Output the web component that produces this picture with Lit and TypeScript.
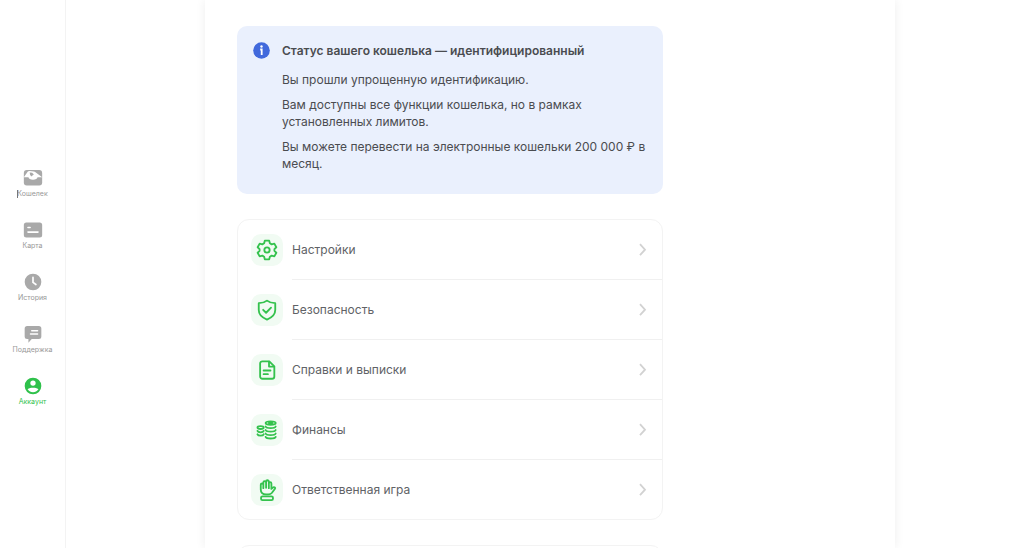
import { LitElement, html, css, svg } from "lit";
import { customElement } from "lit/decorators.js";
import { classMap } from "lit/directives/class-map.js";

const navIcons = {
  wallet: svg`<rect x="1" y="2.500" width="22" height="18.500" rx="3.500"/><path fill="#fff" d="M1 11.200 5.800 4.300q.8-1 2-.8l5.200.6q1 .2 2 .9L23 11.200h-5.500c-.5 2-2.200 2.800-5.500 2.800s-5-.8-5.500-2.800z"/><path d="m8 5.500 3 .3 2 2-3.200 2.400L8.500 8z"/>`,
  card: svg`<rect x="1" y="3" width="22" height="18" rx="3"/><path d="M6 9h2.500M6 14.500h12" stroke="#fff" stroke-width="2" stroke-linecap="round"/>`,
  history: svg`<circle cx="12" cy="12" r="10"/><path d="M12 6.500v6l3.500 2.500" fill="none" stroke="#fff" stroke-width="2" stroke-linecap="round" stroke-linejoin="round"/>`,
  support: svg`<path d="M5 2.500h14a3 3 0 0 1 3 3v9.500a3 3 0 0 1-3 3h-8.500L6.500 22.500V18H5a3 3 0 0 1-3-3V5.500a3 3 0 0 1 3-3z"/><path d="M10.500 8H17.500M9 12h8.500" stroke="#fff" stroke-width="1.800" stroke-linecap="round"/>`,
  account: svg`<circle cx="12" cy="12" r="10"/><circle cx="12" cy="8.500" r="3.200" fill="#fff"/><path fill="#fff" d="M5.500 16c1-2.500 12-2.500 13 0-1.500 2.400-4 3.600-6.500 3.600S7 18.400 5.500 16z"/>`,
};

const menuIcons = {
  settings: svg`<path d="M9.600 1.800h4.800l.7 2.900 2 1.200 2.900-.9 2.200 4-2.100 2v2l2.100 2-2.200 4-2.900-.9-2 1.200-.7 2.900H9.600l-.7-2.900-2-1.200-2.900.9-2.200-4 2.100-2v-2l-2.100-2 2.200-4 2.900.9 2-1.200z"/><circle cx="12" cy="12" r="2.900"/>`,
  security: svg`<path d="M12 1.800c2.500 2 5.500 2.700 9 2.700V12c0 5-3.500 8.200-9 10.400C6.500 20.200 3 17 3 12V4.500c3.500 0 6.500-.7 9-2.700z"/><path d="m7.800 11.800 3.200 3.200 5.400-5.600"/>`,
  documents: svg`<path d="M7 2.500h7.500L20 8v11a2.500 2.500 0 0 1-2.500 2.500H7A2.500 2.500 0 0 1 4.500 19V5A2.500 2.500 0 0 1 7 2.500z"/><path d="M14.200 3v5.300h5.300M8.300 12.500h7.500M8.300 16.500h4.700"/>`,
  finance: svg`<g stroke-width="2"><ellipse cx="16" cy="4.400" rx="5.500" ry="1.900"/><path d="M14 4.400h4"/><path d="M10.500 8.200c1 2.400 10 2.400 11 0M10.500 12c1 2.400 10 2.400 11 0M10.500 15.800c1 2.400 10 2.400 11 0M10.500 19.500c1 2.400 10 2.400 11 0"/><ellipse cx="5" cy="9.300" rx="3.400" ry="1.600"/><path d="M1.600 13c.8 2 6 2 6.800 0M1.600 16.700c.8 2 6 2 6.800 0"/></g>`,
  responsible: svg`<path d="M5.200 11.500V6.300a1.400 1.400 0 0 1 2.800 0V10 3.800a1.500 1.500 0 0 1 3 0V9.500 2.900a1.500 1.500 0 0 1 3 0V10 4.800a1.400 1.400 0 0 1 2.800 0v6l2-1.700c1.300-.8 2.700.5 1.900 1.600l-3.500 4.600c-1 1.200-2.200 1.500-3.700 1.500h-2.500c-3.600 0-5.800-2-5.800-5.300z"/><rect x="5.500" y="19" width="13" height="4" rx="1.500"/>`,
};

type Item<T> = { label: string; icon: T; active?: boolean };

const navigation: Item<keyof typeof navIcons>[] = [
  { label: "Кошелек", icon: "wallet" },
  { label: "Карта", icon: "card" },
  { label: "История", icon: "history" },
  { label: "Поддержка", icon: "support" },
  { label: "Аккаунт", icon: "account", active: true },
];

const menu: Item<keyof typeof menuIcons>[] = [
  { label: "Настройки", icon: "settings" },
  { label: "Безопасность", icon: "security" },
  { label: "Справки и выписки", icon: "documents" },
  { label: "Финансы", icon: "finance" },
  { label: "Ответственная игра", icon: "responsible" },
];

@customElement("app-sidebar")
class AppSidebar extends LitElement {
  static styles = css`
    :host {
      display: flex;
      flex-direction: column;
      justify-content: center;
      box-sizing: border-box;
      width: 66px;
      padding-top: 28px;
      flex: none;
      border-right: 1px solid #f3f3f3;
      background: #fff;
    }
    .nav {
      display: flex;
      flex-direction: column;
      gap: 20px;
    }
    .link {
      display: flex;
      flex-direction: column;
      align-items: center;
      gap: 2px;
      height: 32px;
      font-size: 7px;
      line-height: 8px;
      color: #989898;
      text-decoration: none;
    }
    .icon {
      width: 20px;
      height: 20px;
      fill: currentColor;
      color: #a9a9a9;
    }
    .caret {
      position: relative;
    }
    .caret::before {
      content: "";
      position: absolute;
      left: 0;
      top: 0;
      width: 1px;
      height: 8px;
      background: #777;
    }
    .active,
    .active .icon {
      color: #2fc14b;
    }
  `;

  render() {
    return html`<nav class="nav">
      ${navigation.map(
        (item, index) => html`<a class=${classMap({ link: true, active: !!item.active })} href="#${item.icon}">
          <svg class="icon" viewBox="0 0 24 24" aria-hidden="true">${navIcons[item.icon]}</svg>
          <span class=${classMap({ caret: index === 0 })}>${item.label}</span>
        </a>`
      )}
    </nav>`;
  }
}

@customElement("status-banner")
class StatusBanner extends LitElement {
  static styles = css`
    :host {
      display: flex;
      gap: 12px;
      padding: 16px 16px 22px;
      border-radius: 10px;
      background: #eaf0fd;
      color: #4a4c50;
      font-size: 12px;
      line-height: 17px;
    }
    .info {
      width: 17px;
      height: 17px;
      flex: none;
    }
    .title {
      margin: 0 0 12px;
      font-size: 12px;
      font-weight: 600;
    }
    .text {
      margin: 8px 0 0;
    }
  `;

  render() {
    return html`
      <svg class="info" viewBox="0 0 17 17" aria-hidden="true">
        <circle cx="8.500" cy="8.500" r="8.300" fill="#4169dc" />
        <path d="M7.200 7.500h1.500V13" fill="none" stroke="#fff" stroke-width="1.800" />
        <circle cx="8.500" cy="4.500" r="1.200" fill="#fff" />
      </svg>
      <div>
        <h2 class="title">Статус вашего кошелька — идентифицированный</h2>
        <p class="text">Вы прошли упрощенную идентификацию.</p>
        <p class="text">Вам доступны все функции кошелька, но в рамках установленных лимитов.</p>
        <p class="text">Вы можете перевести на электронные кошельки 200 000 ₽ в месяц.</p>
      </div>
    `;
  }
}

@customElement("account-menu")
class AccountMenu extends LitElement {
  static styles = css`
    :host {
      display: block;
      border: 1px solid #f3f3f3;
      border-radius: 12px;
      font-size: 12px;
      line-height: 17px;
    }
    .row {
      display: flex;
      align-items: center;
      gap: 9px;
      padding-left: 13px;
      color: #606266;
      text-decoration: none;
    }
    .tile {
      display: grid;
      place-items: center;
      width: 32px;
      height: 32px;
      border-radius: 10px;
      background: #f1fbf3;
    }
    .icon {
      width: 22px;
      height: 22px;
      fill: none;
      stroke: #34c24d;
      stroke-width: 2;
      stroke-linejoin: round;
      stroke-linecap: round;
    }
    .body {
      display: flex;
      flex: 1;
      align-items: center;
      justify-content: space-between;
      height: 59px;
      padding-right: 14px;
      border-bottom: 1px solid #f0f0f0;
    }
    .row:last-child .body {
      border-bottom: 0;
    }
    .chevron {
      width: 10px;
      height: 14px;
      fill: none;
      stroke: #d2d2d2;
      stroke-width: 1.800;
    }
  `;

  render() {
    return menu.map(
      (item) => html`<a class="row" href="#${item.icon}">
        <span class="tile"><svg class="icon" viewBox="0 0 24 24" aria-hidden="true">${menuIcons[item.icon]}</svg></span>
        <span class="body">
          <span>${item.label}</span>
          <svg class="chevron" viewBox="0 0 10 14" aria-hidden="true"><path d="m2 1.200 5 5.500-5 5.500" /></svg>
        </span>
      </a>`
    );
  }
}

@customElement("app-root")
class AppRoot extends LitElement {
  static styles = css`
    :host {
      display: flex;
      height: 100vh;
      overflow: hidden;
      background: #fff;
      font-family: Inter, "Liberation Sans", sans-serif;
    }
    .main {
      display: flex;
      flex: 1;
      justify-content: center;
      padding-left: 10px;
    }
    .panel {
      box-sizing: border-box;
      width: 100%;
      max-width: 690px;
      padding: 26px 32px 0;
      background: #fff;
      box-shadow: 0 0 10px rgba(0, 0, 0, 0.07);
    }
    .column {
      display: flex;
      flex-direction: column;
      gap: 25px;
      max-width: 426px;
    }
    .next {
      height: 60px;
      border: 1px solid #f3f3f3;
      border-radius: 12px;
    }
  `;

  render() {
    return html`
      <app-sidebar></app-sidebar>
      <main class="main">
        <div class="panel">
          <div class="column">
            <status-banner></status-banner>
            <account-menu></account-menu>
            <section class="next"></section>
          </div>
        </div>
      </main>
    `;
  }
}
